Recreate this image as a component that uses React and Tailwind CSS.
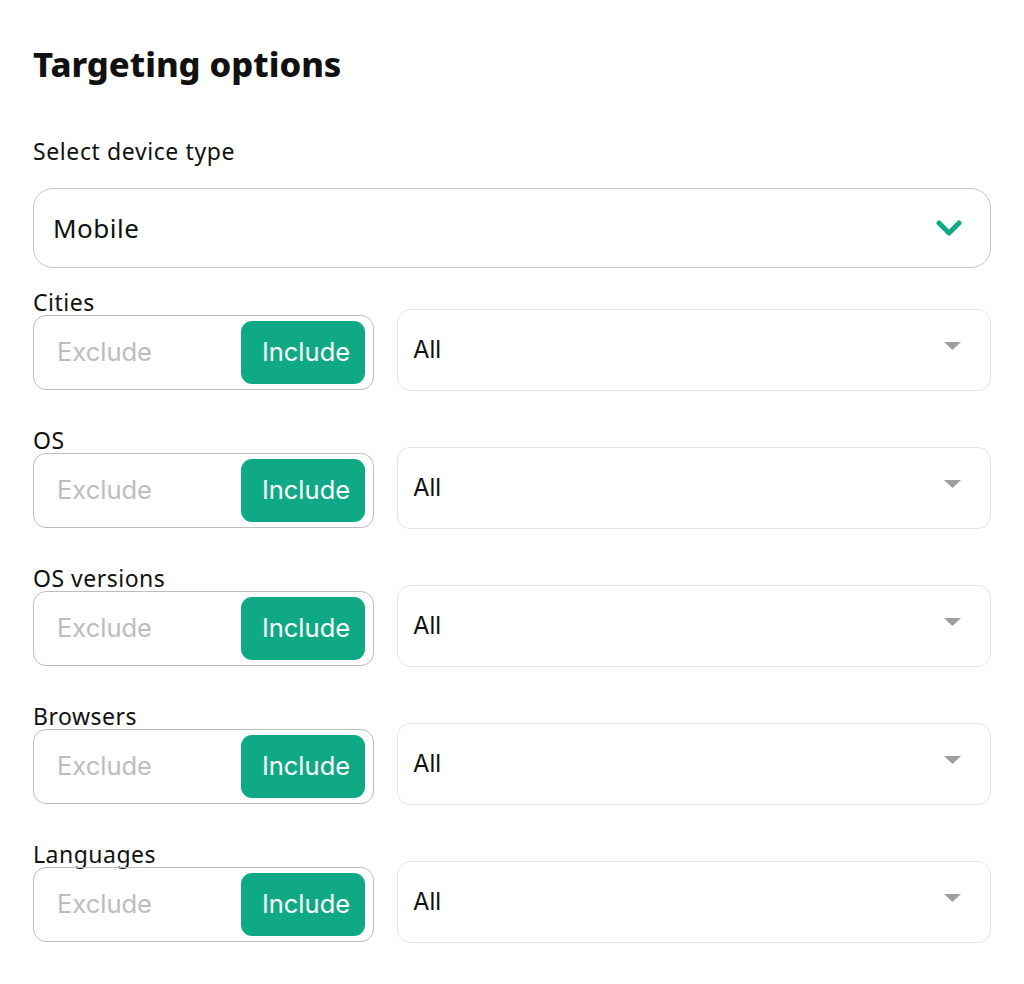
import React from "react";

const rows = ["Cities", "OS", "OS versions", "Browsers", "Languages"];

function Row({ label }) {
  return (
    <div className="flex items-end gap-[23px]">
      <div className="w-[341px] flex flex-col">
        <div className="text-[23px] leading-[24px] tracking-[0.5px] text-[#111]">
          {label}
        </div>
        <div className="mt-[1px] h-[75px] rounded-[13px] border-[1.5px] border-[#bdbdbd] flex items-center justify-between pl-[23px] pr-[8px] [font-family:Inter,sans-serif]">
          <span className="text-[25.5px] text-[#bdbdbd]">Exclude</span>
          <span className="h-[63px] w-[124px] rounded-[11px] bg-[#10a986] text-white text-[25.5px] flex items-center justify-center pl-[6px]">
            Include
          </span>
        </div>
      </div>
      <div className="flex-1 h-[82px] mb-[-1px] rounded-[13px] border-[1.5px] border-[#e6e6e6] flex items-center justify-between pl-[15px] pr-[29px] [font-family:Inter,sans-serif]">
        <span className="text-[24px] text-[#111]">All</span>
        <svg width="17" height="8" viewBox="0 0 17 8" className="mb-[8px]">
          <path d="M0 0 L17 0 L8.5 8 Z" fill="#9e9e9e" />
        </svg>
      </div>
    </div>
  );
}

export default function App() {
  return (
    <div className="w-[1024px] h-[984px] bg-white px-[33px] pt-[42px] [font-family:'Noto_Sans',sans-serif]">
      <h1 className="text-[34.5px] leading-[44px] font-extrabold text-[#111]">Targeting options</h1>
      <div className="mt-[52px] text-[23px] leading-[26px] tracking-[0.6px] text-[#111]">Select device type</div>
      <div className="mt-[24px] h-[80px] rounded-[20px] border-[1.5px] border-[#c6c6c6] flex items-center justify-between pl-[19px] pr-[28px]">
        <span className="text-[26px] tracking-[0.5px] text-[#111]">Mobile</span>
        <svg width="26" height="18" viewBox="0 0 26 18">
          <path d="M3 4 L13 14 L23 4" fill="none" stroke="#10a986" strokeWidth="5" strokeLinecap="round" strokeLinejoin="round" />
        </svg>
      </div>
      <div className="mt-[22px] flex flex-col gap-[38px]">
        {rows.map((r) => (
          <Row key={r} label={r} />
        ))}
      </div>
    </div>
  );
}
